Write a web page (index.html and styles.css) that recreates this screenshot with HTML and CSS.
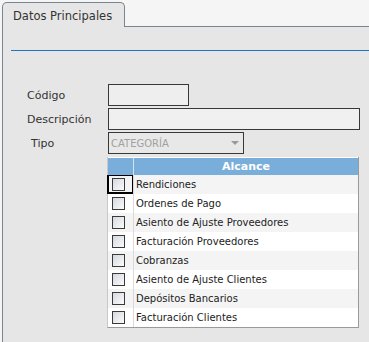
FILE: index.html
```html
<!DOCTYPE html>
<html lang="es">
<head>
    <meta charset="UTF-8">
    <meta name="viewport" content="width=device-width, initial-scale=1.0">
    <title>Datos Principales</title>
    <link rel="stylesheet" href="styles.css">
</head>
<body>
    <div class="tabbar">
        <div class="tab">Datos Principales</div>
        <div class="tab-fill"></div>
    </div>
    <div class="panel">
        <div class="rule"></div>
        <div class="form">
            <label class="lbl">Código</label>
            <div class="field short"></div>

            <label class="lbl">Descripción</label>
            <div class="field long"></div>

            <label class="lbl lbl-tipo">Tipo</label>
            <div class="select">
                <span class="select-text">CATEGORÍA</span>
                <span class="arrow"></span>
            </div>

            <div class="grid">
                <div class="grid-head">
                    <div class="hcheck"></div>
                    <div class="htext">Alcance</div>
                </div>
                <div class="grid-row">
                    <div class="ccheck focus"><span class="box"></span></div>
                    <div class="ctext">Rendiciones</div>
                </div>
                <div class="grid-row">
                    <div class="ccheck"><span class="box"></span></div>
                    <div class="ctext">Ordenes de Pago</div>
                </div>
                <div class="grid-row">
                    <div class="ccheck"><span class="box"></span></div>
                    <div class="ctext">Asiento de Ajuste Proveedores</div>
                </div>
                <div class="grid-row">
                    <div class="ccheck"><span class="box"></span></div>
                    <div class="ctext">Facturación Proveedores</div>
                </div>
                <div class="grid-row">
                    <div class="ccheck"><span class="box"></span></div>
                    <div class="ctext">Cobranzas</div>
                </div>
                <div class="grid-row">
                    <div class="ccheck"><span class="box"></span></div>
                    <div class="ctext">Asiento de Ajuste Clientes</div>
                </div>
                <div class="grid-row">
                    <div class="ccheck"><span class="box"></span></div>
                    <div class="ctext">Depósitos Bancarios</div>
                </div>
                <div class="grid-row">
                    <div class="ccheck"><span class="box"></span></div>
                    <div class="ctext">Facturación Clientes</div>
                </div>
            </div>
        </div>
    </div>
</body>
</html>
```

FILE: styles.css
```css
* {
    margin: 0;
    padding: 0;
    box-sizing: border-box;
}
body {
    font-family: 'DejaVu Sans', Verdana, sans-serif;
    background: #f5f5f5;
    color: #333;
    overflow: hidden;
}
.tabbar {
    display: flex;
    align-items: flex-end;
    padding: 2px 0 0 2px;
    height: 27px;
}
.tab {
    width: 123px;
    height: 25px;
    background: #e6e6e6;
    border: 1px solid #76858f;
    border-bottom: none;
    border-radius: 5px 5px 0 0;
    font-size: 11.5px;
    padding: 6px 0 0 10px;
    color: #333;
}
.tab-fill {
    flex: 1;
    border-bottom: 1px solid #76858f;
}
.panel {
    margin-left: 2px;
    border-left: 1px solid #76858f;
    background: #e6e6e6;
    height: calc(100vh - 27px);
    padding-top: 23px;
}
.rule {
    height: 1px;
    background: #1e74c6;
    margin-left: 8px;
}
.form {
    display: grid;
    grid-template-columns: 81px 252px;
    row-gap: 2px;
    align-items: center;
    margin-top: 33px;
    padding-left: 24px;
}
.lbl {
    font-size: 11px;
    color: #333;
}
.lbl-tipo {
    padding-left: 4px;
}
.field {
    height: 22px;
    border: 1px solid #383838;
    background: #eeeeee;
}
.short {
    width: 81px;
}
.long {
    width: 252px;
    background: #f0f0f0;
}
.select {
    width: 136px;
    height: 22px;
    border: 1px solid #383838;
    background: #e8e8e8;
    display: flex;
    align-items: center;
    justify-content: space-between;
    padding: 0 4px 0 2px;
}
.select-text {
    font-size: 10px;
    color: #a0a0a0;
}
.arrow {
    width: 0;
    height: 0;
    border-left: 4px solid transparent;
    border-right: 4px solid transparent;
    border-top: 4px solid #9a9a9a;
}
.grid {
    grid-column: 2;
    margin: 1px 0 0 -1px;
    width: 252px;
    border-left: 1px solid #c8c8c8;
    border-right: 1px solid #9a9a9a;
    border-bottom: 1px solid #9a9a9a;
}
.grid-head {
    display: flex;
    height: 18px;
    background: #79aedb;
    border-top: 1px solid #fff;
}
.hcheck {
    width: 26px;
    border-right: 1px solid #d3e4f3;
}
.htext {
    flex: 1;
    text-align: center;
    color: #fff;
    font-weight: bold;
    font-size: 11px;
    line-height: 17px;
}
.grid-row {
    display: flex;
    height: 19px;
    background: #fff;
}
.grid-row:nth-child(even) {
    background: #f4f4f4;
}
.ccheck {
    width: 26px;
    border-right: 1px solid #dadada;
    padding: 3px 0 0 4px;
}
.ccheck.focus {
    margin-left: -1px;
    width: 27px;
    padding-left: 5px;
    box-shadow: inset 2px 0 0 #000, inset 0 -2px 0 #000, inset -1px 0 0 #000, inset 0 1px 0 #000;
}
.box {
    display: block;
    width: 13px;
    height: 13px;
    border: 1px solid #3a3a3a;
    background: linear-gradient(135deg, #d4d9e0, #fbfbfb);
}
.ctext {
    flex: 1;
    font-size: 10px;
    line-height: 19px;
    padding-left: 2px;
    color: #222;
}
```
